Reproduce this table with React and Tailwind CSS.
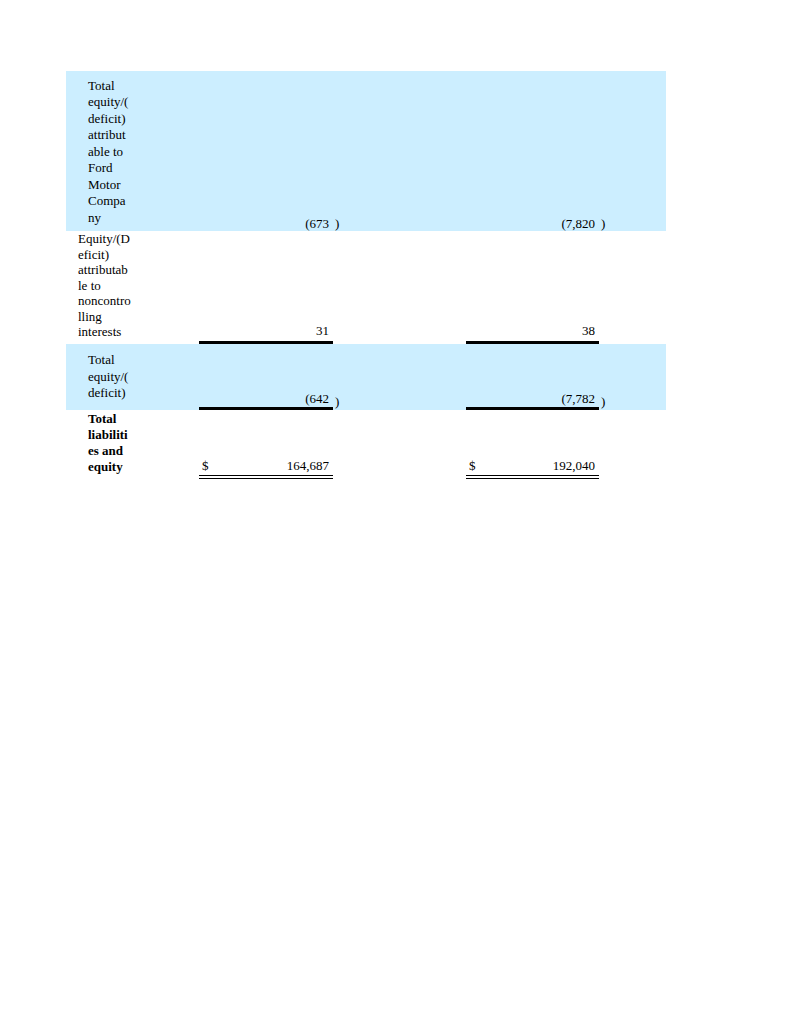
import React from "react";

const rows = [
  {
    lines: ["Total", "equity/(", "deficit)", "attribut", "able to", "Ford", "Motor", "Compa", "ny"],
    a: "(673",
    b: "(7,820",
    paren: true,
    blue: true,
    row: "h-[160px]",
    label: "pl-[22px] pt-[6.5px] leading-[16.5px]",
    num: "leading-[14px] pb-0",
    line: "",
  },
  {
    lines: ["Equity/(D", "eficit)", "attributab", "le to", "noncontro", "lling", "interests"],
    a: "31",
    b: "38",
    row: "h-[113px]",
    label: "pl-[12px] pt-0 leading-[15.5px]",
    num: "leading-[16px] pb-[2px]",
    line: "border-b-[3px] border-black",
  },
  {
    lines: ["Total", "equity/(", "deficit)"],
    a: "(642",
    b: "(7,782",
    paren: true,
    blue: true,
    row: "h-[66px]",
    label: "pl-[22px] pt-[8px] leading-[16.5px]",
    num: "leading-[14px] pb-[1px]",
    line: "border-b-[3px] border-black",
  },
  {
    lines: ["Total", "liabiliti", "es and", "equity"],
    a: "164,687",
    b: "192,040",
    dollar: true,
    bold: true,
    row: "h-[69px]",
    label: "pl-[22px] pt-[1px] leading-[16px]",
    num: "leading-[16px] pb-[1px]",
    line: "border-b-4 border-double border-black",
  },
];

const Value = ({ r, v }) => (
  <div className={`flex items-end justify-between pr-[4px] pl-[3px] ${r.num} ${r.line}`}>
    <span>{r.dollar ? "$" : ""}</span>
    <span>{v}</span>
  </div>
);

export default function App() {
  return (
    <div className="min-h-screen bg-white pt-[71px] pl-[66px] font-['Liberation_Serif','Times_New_Roman',serif] text-[13px] text-black">
      {rows.map((r, i) => (
        <div
          key={i}
          className={`grid w-[600px] grid-cols-[133px_134px_12px_121px_133px_12px_55px] ${r.row} ${
            r.blue ? "bg-[#cceeff]" : ""
          }`}
        >
          <div className={`whitespace-nowrap ${r.label} ${r.bold ? "font-bold" : ""}`}>
            {r.lines.map((l, j) => (
              <div key={j}>{l}</div>
            ))}
          </div>
          <Value r={r} v={r.a} />
          <div className={`flex items-end pl-[2px] ${r.num}`}>{r.paren ? ")" : ""}</div>
          <div />
          <Value r={r} v={r.b} />
          <div className={`flex items-end pl-[2px] ${r.num}`}>{r.paren ? ")" : ""}</div>
          <div />
        </div>
      ))}
    </div>
  );
}
